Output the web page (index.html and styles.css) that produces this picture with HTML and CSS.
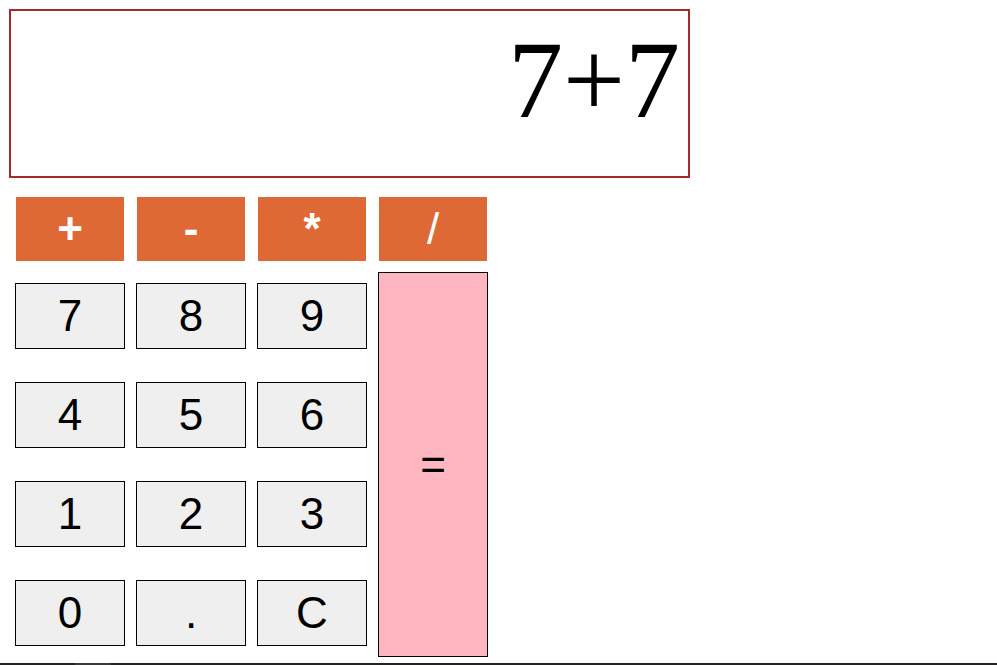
FILE: index.html
```html
<!DOCTYPE html>
<html lang="en">
<head>
<meta charset="utf-8">
<title>Calculator</title>
<link rel="stylesheet" href="styles.css">
</head>
<body>
<div class="calc">
  <div class="display">7+7</div>
  <div class="ops">
    <button class="op">+</button>
    <button class="op">-</button>
    <button class="op">*</button>
    <button class="op op-thin">/</button>
  </div>
  <div class="pad">
    <div class="nums">
      <button class="num">7</button>
      <button class="num">8</button>
      <button class="num">9</button>
      <button class="num">4</button>
      <button class="num">5</button>
      <button class="num">6</button>
      <button class="num">1</button>
      <button class="num">2</button>
      <button class="num">3</button>
      <button class="num">0</button>
      <button class="num">.</button>
      <button class="num">C</button>
    </div>
    <button class="eq">=</button>
  </div>
</div>
<div class="bar"><div class="thumb"></div></div>
</body>
</html>
```

FILE: styles.css
```css
html, body {
  margin: 0;
  padding: 0;
  overflow: hidden;
  background: #ffffff;
}
body {
  width: 997px;
  height: 665px;
  display: flex;
  flex-direction: column;
  font-family: "Liberation Sans", Arial, sans-serif;
}
.calc {
  padding: 9px 0 0 9px;
  height: 654px;
  box-sizing: border-box;
}
.display {
  box-sizing: border-box;
  width: 681px;
  height: 169px;
  border: 2px solid #a52a2a;
  font-family: "Liberation Serif", "Times New Roman", serif;
  font-size: 110px;
  line-height: 126px;
  text-align: right;
  padding: 6px 8px 0 0;
  color: #000;
}
.ops {
  display: flex;
  gap: 13px;
  margin: 19px 0 0 7px;
}
button {
  font-family: "Liberation Sans", Arial, sans-serif;
  padding: 0;
  margin: 0;
  cursor: pointer;
}
.op {
  width: 108px;
  height: 64px;
  border: none;
  background: #df6935;
  color: #ffffff;
  font-size: 44px;
  font-weight: bold;
  line-height: 64px;
}
.op-thin {
  font-weight: normal;
}
.pad {
  display: flex;
  align-items: flex-start;
  gap: 11px;
  margin: 11px 0 0 6px;
}
.nums {
  margin-top: 11px;
  display: grid;
  grid-template-columns: repeat(3, 110px);
  grid-auto-rows: 66px;
  column-gap: 11px;
  row-gap: 33px;
}
.num {
  box-sizing: border-box;
  width: 110px;
  height: 66px;
  border: 1px solid #000;
  background: #efefef;
  color: #000;
  font-size: 44px;
  line-height: 64px;
}
.eq {
  box-sizing: border-box;
  width: 110px;
  height: 385px;
  border: 1px solid #000;
  background: #ffb6c1;
  color: #000;
  font-size: 44px;
}
.bar {
  margin-top: auto;
  height: 2px;
  background: #232323;
  display: flex;
  padding-left: 75px;
}
.thumb {
  width: 36px;
  background: #3a3a3a;
}
```
